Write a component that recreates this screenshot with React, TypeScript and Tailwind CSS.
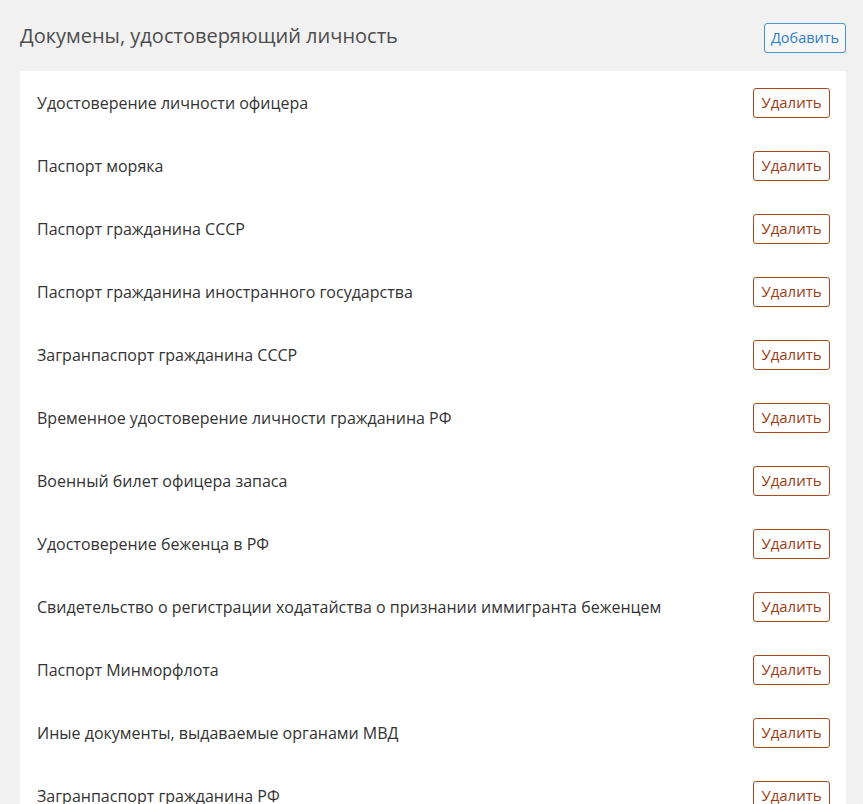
const documents = [
  'Удостоверение личности офицера',
  'Паспорт моряка',
  'Паспорт гражданина СССР',
  'Паспорт гражданина иностранного государства',
  'Загранпаспорт гражданина СССР',
  'Временное удостоверение личности гражданина РФ',
  'Военный билет офицера запаса',
  'Удостоверение беженца в РФ',
  'Свидетельство о регистрации ходатайства о признании иммигранта беженцем',
  'Паспорт Минморфлота',
  'Иные документы, выдаваемые органами МВД',
  'Загранпаспорт гражданина РФ',
  'Вид на жительство в РФ',
];

export default function App() {
  return (
    <div
      className="h-screen overflow-hidden bg-[#f1f1f1] pl-5 pr-[17px] pt-[23px]"
      style={{ fontFamily: '"Open Sans", "Noto Sans", sans-serif' }}
    >
      <div className="mb-[18px] flex h-[30px] items-center justify-between">
        <h1 className="pb-[4px] text-[20px] font-medium text-[#4d4d4d]">Докумены, удостоверяющий личность</h1>
        <button className="h-[30px] w-[82px] rounded-[3px] border border-[#4a93d6] bg-[#f7f7f7] text-[14.5px] text-[#2f7ccc]">
          Добавить
        </button>
      </div>

      <div className="bg-white pl-[17px] pr-[16px]">
        {documents.map((doc) => (
          <div key={doc} className="flex h-[63px] items-center justify-between">
            <span className="text-[16px] text-[#333333]">{doc}</span>
            <button className="h-[30px] w-[77px] rounded-[3px] border border-[#a84820] bg-white text-[15px] text-[#9c3d17]">
              Удалить
            </button>
          </div>
        ))}
      </div>
    </div>
  );
}
